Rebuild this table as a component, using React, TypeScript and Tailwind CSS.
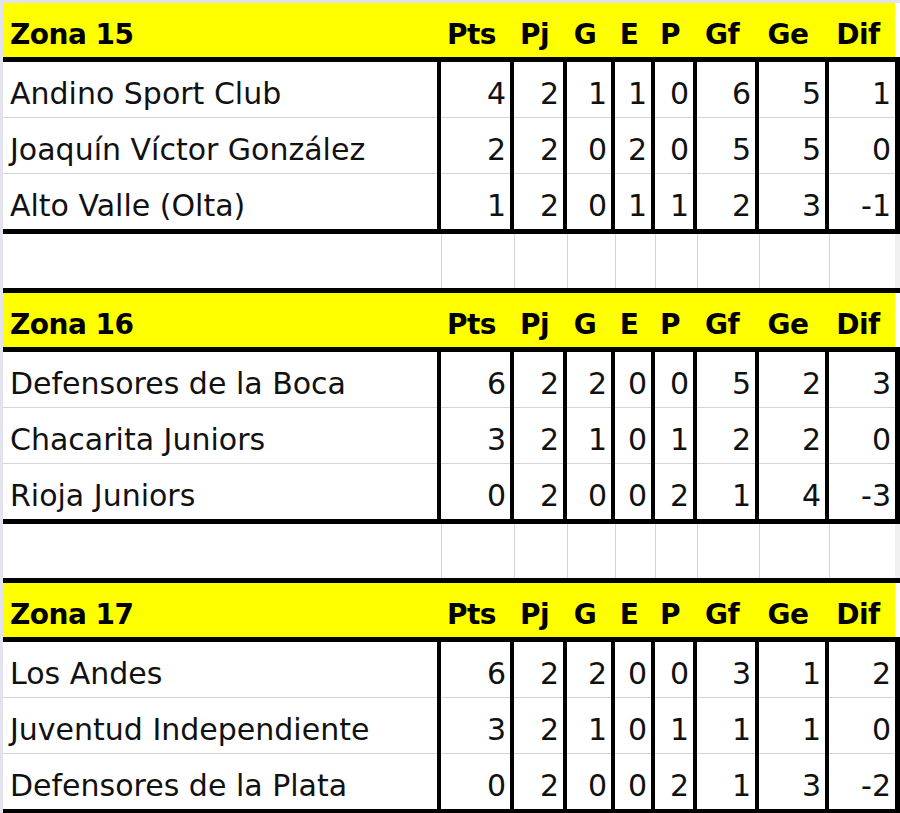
type Row = { name: string; v: (string | number)[] };
type Zone = { title: string; rows: Row[] };

const zones: Zone[] = [
	{
		title: "Zona 15",
		rows: [
			{ name: "Andino Sport Club", v: [4, 2, 1, 1, 0, 6, 5, 1] },
			{ name: "Joaquín Víctor González", v: [2, 2, 0, 2, 0, 5, 5, 0] },
			{ name: "Alto Valle (Olta)", v: [1, 2, 0, 1, 1, 2, 3, -1] },
		],
	},
	{
		title: "Zona 16",
		rows: [
			{ name: "Defensores de la Boca", v: [6, 2, 2, 0, 0, 5, 2, 3] },
			{ name: "Chacarita Juniors", v: [3, 2, 1, 0, 1, 2, 2, 0] },
			{ name: "Rioja Juniors", v: [0, 2, 0, 0, 2, 1, 4, -3] },
		],
	},
	{
		title: "Zona 17",
		rows: [
			{ name: "Los Andes", v: [6, 2, 2, 0, 0, 3, 1, 2] },
			{ name: "Juventud Independiente", v: [3, 2, 1, 0, 1, 1, 1, 0] },
			{ name: "Defensores de la Plata", v: [0, 2, 0, 0, 2, 1, 3, -2] },
		],
	},
];

const labels = ["Pts", "Pj", "G", "E", "P", "Gf", "Ge", "Dif"];
// width of each stat column, left border included
const widths = ["w-[73px]", "w-[53px]", "w-[48px]", "w-[40px]", "w-[42px]", "w-[62px]", "w-[70px]", "w-[70px]"];

function HeaderRow({ title }: { title: string }) {
	return (
		<div className="flex h-[54px]">
			<div className="flex w-[434px] bg-[#ffff00] pt-[18px] pl-[7px] text-[28px] leading-[28px] font-bold tracking-[-0.5px] text-black">
				{title}
			</div>
			{labels.map((l, i) => (
				<div
					key={l}
					className={`${widths[i]} flex justify-center border-l-4 border-transparent bg-[#ffff00] pt-[18px] pr-[8px] text-[28px] leading-[28px] font-bold tracking-[-0.5px] text-black`}
				>
					{l}
				</div>
			))}
			<div className="w-[5px] bg-white" />
		</div>
	);
}

function DataRow({ row, last }: { row: Row; last: boolean }) {
	const line = last ? "" : "shadow-[inset_0_-1px_0_#d4d4d4]";
	return (
		<div className={`flex ${last ? "h-[55px]" : "h-[56px]"}`}>
			<div className={`w-[434px] bg-white pt-[17px] pl-[7px] text-[30px] leading-[30px] whitespace-nowrap text-[#111] ${line}`}>
				{row.name}
			</div>
			{row.v.map((n, i) => (
				<div
					key={i}
					className={`${widths[i]} border-l-4 border-black bg-white pt-[17px] pr-[4px] text-right text-[30px] leading-[30px] text-[#111] ${line}`}
				>
					{n}
				</div>
			))}
			<div className="w-[5px] bg-black" />
		</div>
	);
}

function EmptyRow() {
	return (
		<div className="flex h-[54px]">
			<div className="w-[434px] bg-white" />
			{widths.map((w, i) => (
				<div key={i} className={`${w} border-l-4 border-white bg-white shadow-[inset_1px_0_0_#d4d4d4]`} />
			))}
			<div className="w-[5px] bg-[#f0f0f0]" />
		</div>
	);
}

export default function App() {
	return (
		<div className="h-[813px] w-[900px] overflow-hidden bg-[#e2e3ee] pt-[3px] pl-[3px] font-['DejaVu_Sans',sans-serif]">
			{zones.map((z, zi) => (
				<div key={z.title} className="flex flex-col">
					{zi > 0 && <div className="h-[5px] bg-black" />}
					<HeaderRow title={z.title} />
					<div className="h-[5px] bg-black" />
					{z.rows.map((r, ri) => (
						<DataRow key={r.name} row={r} last={ri === z.rows.length - 1} />
					))}
					<div className="h-[5px] bg-black" />
					{zi < zones.length - 1 && <EmptyRow />}
				</div>
			))}
		</div>
	);
}
